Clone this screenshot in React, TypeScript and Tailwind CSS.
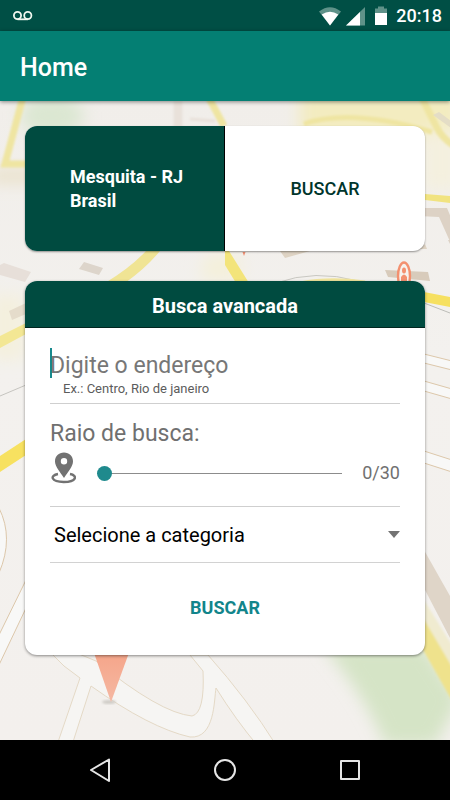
import { useState } from "react";

const font = "font-[Roboto,'Liberation_Sans',sans-serif]";

function MapBackground() {
  return (
    <svg
      className="absolute inset-0 h-full w-full"
      viewBox="0 101 450 639"
      preserveAspectRatio="xMidYMid slice"
      aria-hidden="true"
    >
      <defs>
        <filter id="soft" x="-30%" y="-30%" width="160%" height="160%">
          <feGaussianBlur stdDeviation="8" />
        </filter>
        <filter id="slight" x="-20%" y="-20%" width="140%" height="140%">
          <feGaussianBlur stdDeviation="1.2" />
        </filter>
        <linearGradient id="land" x1="0" y1="0" x2="0" y2="1">
          <stop offset="0" stopColor="#f1eeea" />
          <stop offset="0.4" stopColor="#f3f1ee" />
          <stop offset="1" stopColor="#f3f0ed" />
        </linearGradient>
        <linearGradient id="pin" x1="0" y1="0" x2="0" y2="1">
          <stop offset="0" stopColor="#f5a488" />
          <stop offset="1" stopColor="#f5b8a3" />
        </linearGradient>
      </defs>
      <rect y="101" width="450" height="639" fill="url(#land)" />

      {/* hazy fields of colour */}
      <g filter="url(#soft)">
        <ellipse cx="52" cy="116" rx="32" ry="20" fill="#dbe7d2" />
        <path d="M-10 170H40V182H-10Z" fill="#e8dfc4" />
        <path d="M300 90H460V140H300Z" fill="#f3ecc0" />
        <path d="M422 130H460V190H422Z" fill="#f4f0df" />
        <path d="M-10 295H25V360H-10Z" fill="#f4f0de" />
        <path d="M205 255H240V280H200Z" fill="#f4f0da" />
        <path d="M322 645H425L460 700L435 745H385Q365 695 322 645Z" fill="#d5e4c6" />
      </g>

      {/* upper streets */}
      <g filter="url(#slight)" fill="none" stroke="#efe5a2" strokeWidth="7">
        <path d="M23 97L5 164H28" />
        <path d="M209 98L224 126" />
        <path d="M304 124Q350 108 432 132" strokeWidth="5" />
        <path d="M421 96L436 126Q442 138 453 145" />
        <path d="M178 101V127" stroke="#e9e1da" strokeWidth="9" />
        <path d="M190 119L215 121" stroke="#e9e1da" strokeWidth="3" />
      </g>
      <path d="M433 115L439 112L455 124V131Z" fill="#e4ddc6" />
      <path d="M425 194L450 196V203L425 200Z" fill="#f1e380" />
      <path d="M418 208H447L452 220V246L439 217L418 216Z" fill="#ddd2c5" />
      <path d="M280 251H310L285 258Z" fill="#ded3c3" />
      <path d="M425 244L427 249H420Z" fill="#ded3c3" />
      <path d="M448 240H451V246Z" fill="#ddd2c5" />
      <path d="M385 270L428 272L430 281L388 277Z" fill="#d8cbbb" />
      <path d="M4 263L31 272L25 282L0 275V265Z" fill="#e7dfd9" />
      <path d="M84 262L103 268L99 275L79 269Z" fill="#ddd5cb" />
      <path d="M9 311L26 303V314L12 320Z" fill="#e5dccb" />
      <path d="M146 251H160Q146 268 125 283H105Q130 268 146 251Z" fill="#f0e494" />
      <path d="M225 251H229L249 283H236L225 265Z" fill="#f3e47a" />
      <path d="M276 283Q315 269 358 281" fill="none" stroke="#c9c8c2" />
      <path d="M300 283Q330 277 365 282" fill="none" stroke="#f1e59d" strokeWidth="3" />
      <ellipse cx="404" cy="276" rx="6" ry="13.5" strokeWidth="2.4" fill="#f6f2ed" stroke="#f3906f" />
      <ellipse cx="404" cy="270.500" rx="2" ry="3" fill="#f3906f" />
      <path d="M401 284V277Q404 272 407 277V284Z" fill="#f3906f" />
      <path d="M242.500 252H245.500L244 256Z" fill="#ef8d70" />

      {/* side streets */}
      <path d="M424 292L450 297V307L424 302Z" fill="#f6e060" />
      <path d="M424 303L450 313" stroke="#bdbdb8" />
      <path d="M0 336L26 323V334L0 348Z" fill="#f3e794" />
      <path d="M0 396L26 385" stroke="#c5c4bf" />
      <path d="M0 456L26 439V455L0 472Z" fill="#f7e160" />
      <g fill="#f8f8f7" stroke="#dcc7aa" strokeWidth="1">
        <path d="M424 354L452 361V370L424 363Z" />
        <path d="M424 381L452 389V399L424 391Z" />
        <path d="M424 451L452 460V472L424 463Z" />
        <path d="M-1 508Q14 538 -1 573Z" />
        <path d="M-2 637L27 578V606L-2 667Z" />
      </g>
      <path d="M424 550L450 596V638L424 588Z" fill="#dfd5c8" />
      <g filter="url(#slight)">
        <path d="M424 600L455 650V680L424 625Z" fill="#f0ebd0" />
        <path d="M422 616L455 672V706L422 648Z" fill="#efe28c" />
      </g>

      {/* lower streets */}
      <path
        d="M50 652Q63 667 80 678L57 745H72L91 686Q150 728 190 737C215 739 214 700 216 688Q236 720 257 745H276Q248 700 208 655H190L203 671Q205 713 192 716Q160 713 96 661L79 654Z"
        fill="#f6f5f3"
        stroke="#e4d9c6"
      />
      <ellipse cx="109" cy="702" rx="7" ry="2" fill="#d0cdc8" filter="url(#slight)" />
      <path d="M93 650H130L111 702Z" fill="url(#pin)" />
    </svg>
  );
}

function StatusBar() {
  return (
    <div className="flex h-[31px] items-center bg-[#004f45] pr-2 pl-[13px] text-white">
      <svg className="h-[10px] w-[20px]" viewBox="0 0 20 10" fill="none" stroke="#f1f7ef" strokeWidth="1.8">
        <circle cx="4.5" cy="4.5" r="3.6" />
        <circle cx="14.8" cy="4.5" r="3.6" />
        <path d="M4.5 8.3H15" />
      </svg>
      <svg className="ml-auto h-[20px] w-[69px]" viewBox="0 0 69 20">
        <path d="M0 5.5Q11 -3 22 5.5L11 19.5Z" fill="#5f9289" />
        <path d="M2.700 8.500Q11 3 19.300 8.500L11 19.500Z" fill="#fff" />
        <path d="M27 19.500L46 1V19.500Z" fill="#5f9289" />
        <path d="M27 19.500L41 6V19.500Z" fill="#fff" />
        <path d="M56 2.500H59V0.500H65V2.500H68V8H56Z" fill="#5f9289" />
        <path d="M56 7H68V19H56Z" fill="#fff" />
      </svg>
      <span className="ml-2 pt-px text-[18px] leading-[24px] font-medium">20:18</span>
    </div>
  );
}

export default function App() {
  const [radius, setRadius] = useState(0);
  return (
    <div className={`${font} flex min-h-screen flex-col bg-black`}>
      <StatusBar />
      <header className="relative z-10 flex h-[70px] items-center bg-[#047f73] px-5 pt-1 shadow-[0_1px_4px_rgba(0,0,0,0.45)]">
        <h1 className="text-[25px] leading-[32px] font-medium text-white">Home</h1>
      </header>

      <main className="relative flex-1 overflow-hidden">
        <MapBackground />
        <div className="relative flex flex-col gap-[30px] px-[25px] pt-[25px] pb-[84px]">
          <section className="grid h-[125px] grid-cols-2 overflow-hidden rounded-[12px] bg-white shadow-[0_1px_2px_rgba(0,0,0,0.4)]">
            <div className="flex items-center border-r border-black bg-[#004b40] pr-5 pl-[45px] text-[18px] leading-[24px] font-bold text-white">
              <p>
                Mesquita - RJ
                <br />
                Brasil
              </p>
            </div>
            <button type="button" className="text-[18px] leading-[24px] font-medium text-[#00352c]">
              BUSCAR
            </button>
          </section>

          <form
            className="overflow-hidden rounded-[12px] bg-white shadow-[0_1px_3px_rgba(0,0,0,0.45)]"
            onSubmit={(e) => e.preventDefault()}
          >
            <h2 className="h-[47px] border-b border-[#00261f] bg-[#004b40] pt-[10px] text-center text-[20px] leading-[30px] font-bold text-white">
              Busca avancada
            </h2>
            <div className="px-[25px]">
              <div className="border-b border-[#cfcfcf] pt-5 pb-[5px]">
                <div className="flex h-[32px] items-start">
                  <span className="-mr-[2px] h-[30px] w-[2px] bg-[#17898d]" />
                  <input
                    id="address"
                    type="text"
                    aria-label="Digite o endereço"
                    placeholder="Digite o endereço"
                    className="h-[32px] w-full min-w-0 bg-transparent pt-1 text-[23px] text-[#333] outline-none placeholder:text-[#777]"
                  />
                </div>
                <label htmlFor="address" className="block pl-[13px] text-[13px] leading-[18px] text-[#5c5c5c]">
                  Ex.: Centro, Rio de janeiro
                </label>
              </div>

              <div className="border-b border-[#cfcfcf] pt-[14px] pb-[14px]">
                <label htmlFor="radius" className="block text-[23px] leading-[32px] text-[#707070]">
                  Raio de busca:
                </label>
                <div className="flex h-[42px] items-center pt-1">
                  <svg className="mb-[10px] h-[32px] w-[26px] shrink-0" viewBox="0 0 26 32" aria-hidden="true">
                    <path
                      fillRule="evenodd"
                      fill="#727272"
                      d="M14 0.500C8.800 0.500 5 4.400 5 9.200C5 14.300 9.500 19 14 26C18.500 19 23 14.300 23 9.200C23 4.400 19.200 0.500 14 0.500ZM14 6A3.200 3.200 0 1 1 14 12.400A3.200 3.200 0 0 1 14 6Z"
                    />
                    <path
                      d="M8 22C-0.500 23.500 1 30 13.700 30C26.500 30 28 23.500 20 22"
                      fill="none"
                      stroke="#727272"
                      strokeWidth="2.400"
                    />
                  </svg>
                  <input
                    id="radius"
                    type="range"
                    min={0}
                    max={30}
                    value={radius}
                    onChange={(e) => setRadius(Number(e.target.value))}
                    className="ml-[21px] h-[16px] min-w-0 flex-1 appearance-none bg-transparent [&::-webkit-slider-runnable-track]:h-[1px] [&::-webkit-slider-runnable-track]:bg-[#8c8c8c] [&::-webkit-slider-thumb]:-mt-[7px] [&::-webkit-slider-thumb]:size-[15px] [&::-webkit-slider-thumb]:appearance-none [&::-webkit-slider-thumb]:rounded-full [&::-webkit-slider-thumb]:bg-[#1f8a8d]"
                  />
                  <output htmlFor="radius" className="w-[58px] text-right text-[18px] leading-[24px] text-[#707070]">
                    {radius}/30
                  </output>
                </div>
              </div>

              <div className="flex items-center border-b border-[#d2d2d2]">
                <select
                  aria-label="Categoria"
                  className="h-[55px] min-w-0 flex-1 appearance-none bg-transparent pl-1 text-[20px] text-black outline-none"
                >
                  <option>Selecione a categoria</option>
                </select>
                <svg className="h-[7px] w-[12px]" viewBox="0 0 12 7" aria-hidden="true">
                  <path d="M0 0H12L6 7Z" fill="#737373" />
                </svg>
              </div>

              <button
                type="submit"
                className="mb-[3px] block h-[89px] w-full text-center text-[18px] leading-[24px] font-bold text-[#12858b]"
              >
                BUSCAR
              </button>
            </div>
          </form>
        </div>
      </main>

      <nav className="flex h-[60px] items-center justify-center gap-[101px] bg-black">
        <button type="button" aria-label="Voltar" className="size-[24px]">
          <svg viewBox="0 0 24 24" fill="none" stroke="#e6e6e6" strokeWidth="2" strokeLinejoin="round">
            <path d="M21 1.500L3 12L21 23Z" />
          </svg>
        </button>
        <button type="button" aria-label="Início" className="size-[24px]">
          <svg viewBox="0 0 24 24" fill="none" stroke="#e6e6e6" strokeWidth="2">
            <circle cx="12" cy="12" r="10" />
          </svg>
        </button>
        <button type="button" aria-label="Recentes" className="size-[24px]">
          <svg viewBox="0 0 24 24" fill="none" stroke="#e6e6e6" strokeWidth="2" strokeLinejoin="round">
            <path d="M3 3H21V21H3Z" />
          </svg>
        </button>
      </nav>
    </div>
  );
}
